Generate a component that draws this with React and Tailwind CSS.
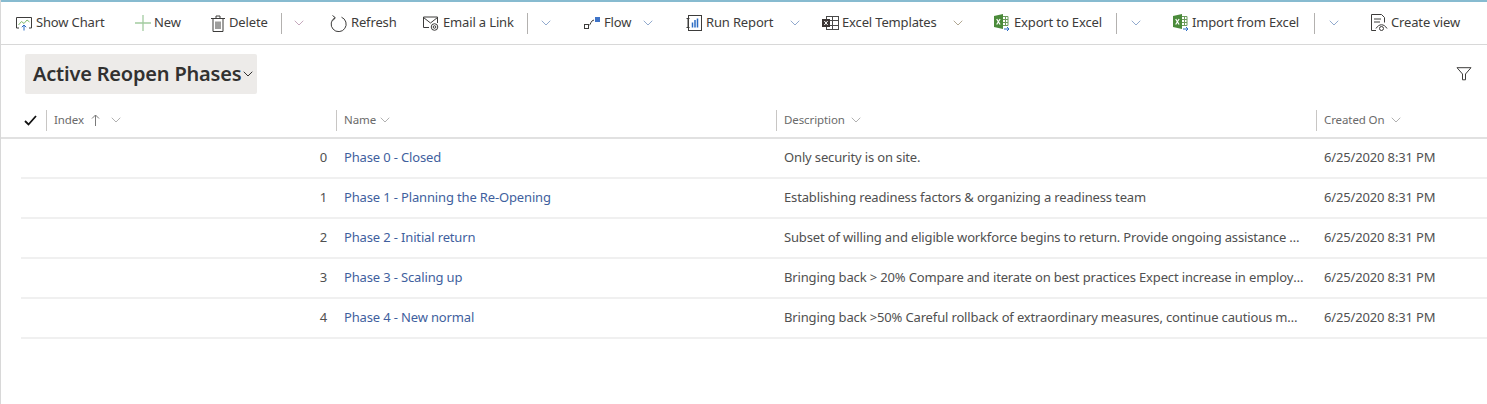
import { ChevronDown } from "lucide-react";

const stroke = "#3d3c3b";

function ChartIcon() {
  return (
    <svg width="17" height="17" viewBox="0 0 17 17" fill="none">
      <path d="M3 13H.5V2.5h15V13H13" stroke={stroke} />
      <path d="M2.5 10l3-3.5 2.500 2L11 5l2.500 2" stroke="#7fba6b" />
      <path d="M8 15.500V10M5.800 12.200L8 10l2.200 2.200" stroke="#2b6cc4" />
    </svg>
  );
}

function PlusIcon() {
  return (
    <svg width="16" height="16" viewBox="0 0 16 16" fill="none">
      <path d="M8 0v16M0 8h16" stroke="#a3cba0" strokeWidth="1.300" />
    </svg>
  );
}

function TrashIcon() {
  return (
    <svg width="14" height="17" viewBox="0 0 14 17" fill="none">
      <path d="M0 3.500h14M5 3V1h4v2M2 4v12.500h10V4M5 6.500v7.500M7 6.500v7.500M9 6.500v7.500" stroke={stroke} />
    </svg>
  );
}

function RefreshIcon() {
  return (
    <svg width="17" height="17" viewBox="0 0 17 17" fill="none">
      <path d="M5 2.600a7.500 7.500 0 1 0 6.500-.4" stroke={stroke} />
      <path d="M2.500.5L5.300 2.700 3 5.500" stroke={stroke} />
    </svg>
  );
}

function MailIcon() {
  return (
    <svg width="17" height="15" viewBox="0 0 17 15" fill="none">
      <path d="M7 11.500H1.500V1h14v6" stroke={stroke} />
      <path d="M1.500 1.500L8.500 7l7-5.500" stroke={stroke} />
      <circle cx="12.500" cy="11" r="3.300" stroke={stroke} />
      <circle cx="12.500" cy="11" r="1.300" stroke={stroke} />
    </svg>
  );
}

function FlowIcon() {
  return (
    <svg width="16" height="12" viewBox="0 0 16 12" fill="none">
      <rect x=".5" y="7.500" width="4" height="4" stroke={stroke} />
      <path d="M5 8.500c2-1 1.500-5 5-5.500" stroke={stroke} />
      <rect x="11" y="0" width="5" height="5" fill="#3f74c8" />
    </svg>
  );
}

function ReportIcon() {
  return (
    <svg width="16" height="16" viewBox="0 0 16 16" fill="none">
      <path d="M.5 3.500h3M.5 12.500h3M2 3.500v9" stroke={stroke} />
      <rect x="2.500" y=".5" width="13" height="15" stroke={stroke} />
      <path d="M6.500 7.500v5M9 5v7.500M11.500 3.500v9" stroke="#2b6cc4" strokeWidth="1.500" />
    </svg>
  );
}

function TemplateIcon() {
  return (
    <svg width="17" height="15" viewBox="0 0 17 15" fill="none">
      <rect x="4.500" y=".5" width="12" height="13" stroke="#4a4a4a" />
      <path d="M4.500 4.500h12M4.500 9.500h12M10.500 .5v13" stroke="#4a4a4a" />
      <rect x="0" y="3" width="8" height="8" fill="#3b3534" />
      <path d="M2.300 5l3.400 4M5.700 5L2.300 9" stroke="#fff" />
    </svg>
  );
}

function ExcelIcon() {
  return (
    <svg width="16" height="18" viewBox="0 0 16 18" fill="none">
      <path d="M0 2l9-2v15l-9-2z" fill="#4b8b3b" />
      <path d="M2.700 5l3.400 5.500M6.100 5L2.700 10.500" stroke="#fff" strokeWidth="1.200" />
      <path d="M9 2.500h5v9H9M11.500 2.500v9M9 5.500h5M9 8.500h5" stroke="#6a9a5a" />
      <path d="M10 15h5M13 13l2 2-2 2" stroke="#2b6cc4" />
    </svg>
  );
}

function ViewIcon() {
  return (
    <svg width="17" height="18" viewBox="0 0 17 18" fill="none">
      <path d="M5 16.500H.5V.5h10l3 3v5" stroke={stroke} />
      <path d="M3 5h7M3 8h6" stroke={stroke} />
      <path d="M5 14.500c3-5 8-5 11 0" stroke={stroke} />
      <circle cx="10.500" cy="14.500" r="2" stroke={stroke} />
    </svg>
  );
}

function SmallChevron({ color = "#5a7fb5", size = 16, className = "" }) {
  return <ChevronDown size={size} color={color} strokeWidth={1} className={className} />;
}

function ToolItem({ icon, label, iconBox, textBox, after }) {
  return (
    <div className="flex items-center h-full shrink-0">
      <div className={`flex items-center justify-center ${iconBox}`}>{icon}</div>
      <span className={`whitespace-nowrap ${textBox}`}>{label}</span>
      {after}
    </div>
  );
}

const Separator = ({ className }) => <div className={`w-px h-[21px] bg-[#b3b1af] shrink-0 ${className}`} />;

const rows = [
  ["0", "Phase 0 - Closed", "Only security is on site."],
  ["1", "Phase 1 - Planning the Re-Opening", "Establishing readiness factors & organizing a readiness team"],
  ["2", "Phase 2 - Initial return", "Subset of willing and eligible workforce begins to return. Provide ongoing assistance and guidance to employees"],
  ["3", "Phase 3 - Scaling up", "Bringing back > 20% Compare and iterate on best practices Expect increase in employee questions and requests"],
  ["4", "Phase 4 - New normal", "Bringing back >50% Careful rollback of extraordinary measures, continue cautious monitoring of all sites"],
];

const cols = "grid grid-cols-[24px_290px_440px_540px_172px]";

function HeaderCell({ children }) {
  return (
    <div className="flex items-center h-[21px] border-l border-[#c8c6c4] pl-[7px] text-[11.5px] text-[#6a6a6a] tracking-[-0.1px]">
      {children}
    </div>
  );
}

export default function App() {
  return (
    <div className="w-[1487px] h-[404px] overflow-hidden bg-white border-l border-[#d8d8d8] text-[#3d3c3b] text-[13px] font-['Noto_Sans',sans-serif]">
      <div className="h-[2px] -ml-px bg-[#87bbd0]" />
      <div className="flex items-center h-[43px] -ml-px border-b border-[#d8d8d8] pl-[12px] tracking-[-0.15px]">
        <ToolItem icon={<ChartIcon />} label="Show Chart" iconBox="w-[24px]" textBox="w-[95px]" />
        <ToolItem icon={<PlusIcon />} label="New" iconBox="w-[23px]" textBox="w-[53px]" />
        <ToolItem icon={<TrashIcon />} label="Delete" iconBox="w-[22px]" textBox="w-[52px]" />
        <Separator className="mr-[9px]" />
        <div className="w-[35px] shrink-0"><SmallChevron color="#a87c9a" /></div>
        <ToolItem icon={<RefreshIcon />} label="Refresh" iconBox="w-[25px]" textBox="w-[67px]" />
        <ToolItem icon={<MailIcon />} label="Email a Link" iconBox="w-[25px]" textBox="w-[84px]" />
        <Separator className="mr-[10px]" />
        <div className="w-[41px] shrink-0"><SmallChevron /></div>
        <ToolItem icon={<FlowIcon />} label="Flow" iconBox="w-[25px]" textBox="w-[36px]" after={<div className="w-[42px]"><SmallChevron /></div>} />
        <ToolItem icon={<ReportIcon />} label="Run Report" iconBox="w-[24px]" textBox="w-[81px]" after={<div className="w-[31px]"><SmallChevron /></div>} />
        <ToolItem icon={<TemplateIcon />} label="Excel Templates" iconBox="w-[24px]" textBox="w-[108px]" after={<div className="w-[39px]"><SmallChevron color="#8a7a5a" /></div>} />
        <ToolItem icon={<ExcelIcon />} label="Export to Excel" iconBox="w-[25px]" textBox="w-[102px]" />
        <Separator className="mr-[11px]" />
        <div className="w-[41px] shrink-0"><SmallChevron /></div>
        <ToolItem icon={<ExcelIcon />} label="Import from Excel" iconBox="w-[23px]" textBox="w-[122px]" />
        <Separator className="mr-[11px]" />
        <div className="w-[41px] shrink-0"><SmallChevron /></div>
        <ToolItem icon={<ViewIcon />} label="Create view" iconBox="w-[24px]" textBox="w-[72px]" />
      </div>

      <div className="flex items-center justify-between h-[58px] pl-[24px] pr-[15px]">
        <div className="flex items-center h-[40px] w-[232px] bg-[#edebe9] rounded-[2px] pl-[8px] text-[20px] font-semibold text-[#323130] tracking-[-0.2px]">
          <span className="w-[207px] whitespace-nowrap">Active Reopen Phases</span>
          <ChevronDown size={16} color="#323130" strokeWidth={1.5} />
        </div>
        <svg width="16" height="14" viewBox="0 0 16 14" fill="none">
          <path d="M1 .7h14L9.500 7v5.800h-3V7z" stroke="#3d3c3b" />
        </svg>
      </div>

      <div className={`${cols} items-center h-[36px] pl-[21px] border-b-2 border-[#e1e1e1]`}>
        <div className="pl-[2px]">
          <svg width="13" height="11" viewBox="0 0 13 11" fill="none">
            <path d="M1 6l3.500 3.500L12 1" stroke="#111" strokeWidth="1.800" />
          </svg>
        </div>
        <HeaderCell>
          <span>Index</span>
          <svg width="9" height="12" viewBox="0 0 9 12" fill="none" className="ml-[7px]">
            <path d="M4.500 12V1M1 4.500L4.500 1 8 4.500" stroke="#7a7a7a" />
          </svg>
          <SmallChevron color="#8a8a8a" className="ml-[8px]" />
        </HeaderCell>
        <HeaderCell>
          <span>Name</span>
          <SmallChevron color="#8a8a8a" className="ml-[1px]" />
        </HeaderCell>
        <HeaderCell>
          <span>Description</span>
          <SmallChevron color="#8a8a8a" className="ml-[3px]" />
        </HeaderCell>
        <HeaderCell>
          <span>Created On</span>
          <SmallChevron color="#8a8a8a" className="ml-[3px]" />
        </HeaderCell>
      </div>

      {rows.map(([index, name, description]) => (
        <div key={index} className={`${cols} items-center h-[40px] ml-[20px] pl-px border-b-2 border-[#f0f0f0] text-[13px] text-[#505050] tracking-[-0.15px]`}>
          <div />
          <div className="text-right pr-[9px]">{index}</div>
          <div className="pl-[8px] text-[#3f5f9e] whitespace-nowrap">{name}</div>
          <div className="pl-[8px] pr-[12px] truncate">{description}</div>
          <div className="pl-[8px] whitespace-nowrap">6/25/2020 8:31 PM</div>
        </div>
      ))}
    </div>
  );
}
